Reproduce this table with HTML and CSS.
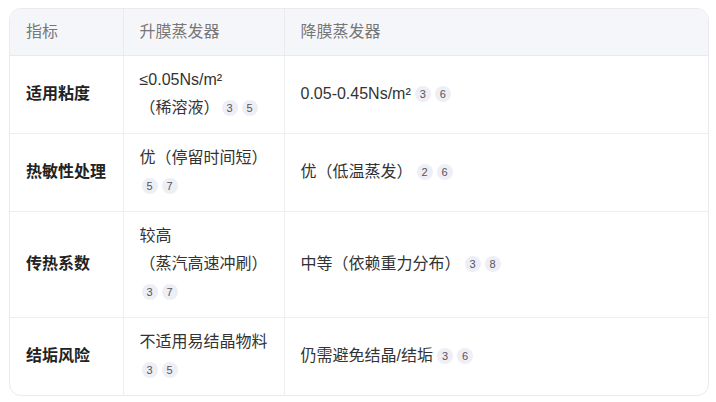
FILE: index.html
```html
<!DOCTYPE html>
<html lang="zh-CN">
<head>
<meta charset="utf-8">
<link rel="stylesheet" href="styles.css">
</head>
<body>
<div class="wrap">
  <table class="cmp">
    <colgroup>
      <col class="c1"><col class="c2"><col class="c3">
    </colgroup>
    <thead>
      <tr><th>指标</th><th>升膜蒸发器</th><th>降膜蒸发器</th></tr>
    </thead>
    <tbody>
      <tr class="r1">
        <td class="k">适用粘度</td>
        <td>≤0.05Ns/m²<br>（稀溶液）<span class="b">3</span><span class="b">5</span></td>
        <td>0.05-0.45Ns/m²<span class="b">3</span><span class="b">6</span></td>
      </tr>
      <tr class="r2">
        <td class="k">热敏性处理</td>
        <td>优（停留时间短）<br><span class="b">5</span><span class="b">7</span></td>
        <td>优（低温蒸发）<span class="b">2</span><span class="b">6</span></td>
      </tr>
      <tr class="r3">
        <td class="k">传热系数</td>
        <td>较高<br>（蒸汽高速冲刷）<br><span class="b">3</span><span class="b">7</span></td>
        <td>中等（依赖重力分布）<span class="b">3</span><span class="b">8</span></td>
      </tr>
      <tr class="r4">
        <td class="k">结垢风险</td>
        <td>不适用易结晶物料<br><span class="b">3</span><span class="b">5</span></td>
        <td>仍需避免结晶/结垢<span class="b">3</span><span class="b">6</span></td>
      </tr>
    </tbody>
  </table>
</div>
</body>
</html>
```
FILE: styles.css
```css
* { box-sizing: border-box; }
html, body { margin: 0; padding: 0; background: #fff; }
body {
  font-family: "Liberation Sans", "Noto Sans CJK SC", sans-serif;
  font-size: 16px;
  color: #333;
}
.wrap {
  margin: 8px 8px 0 9px;
  width: 700px;
  border: 1px solid #e9e9ee;
  border-radius: 12px;
  overflow: hidden;
}
.cmp {
  width: 100%;
  border-collapse: collapse;
  table-layout: fixed;
}
.c1 { width: 113px; }
.c2 { width: 161px; }
.cmp th {
  background: #f5f6f9;
  color: #777;
  font-weight: normal;
  text-align: left;
  height: 46px;
  padding: 0 16px;
  line-height: 22px;
  white-space: nowrap;
  border-bottom: 1px solid #e9e9ee;
  border-left: 1px solid #e9e9ee;
}
.cmp th:first-child, .cmp td:first-child { border-left: none; }
.cmp td {
  padding: 0 16px;
  line-height: 28px;
  vertical-align: middle;
  border-top: 1px solid #eeeef2;
  border-left: 1px solid #eeeef2;
  color: #333;
}
.cmp tbody tr:first-child td { border-top: none; }
.r1 td { height: 78px; }
.r2 td { height: 78px; }
.r3 td { height: 106px; }
.r4 td { height: 78px; }
.cmp td.k { font-weight: bold; color: #222; }
.b {
  display: inline-block;
  width: 16px;
  height: 16px;
  line-height: 16px;
  margin-left: 4px;
  border-radius: 50%;
  background: #eeeef6;
  color: #555;
  font-size: 11px;
  text-align: center;
  vertical-align: 1px;
}
br + .b { margin-left: 2px; }
```
